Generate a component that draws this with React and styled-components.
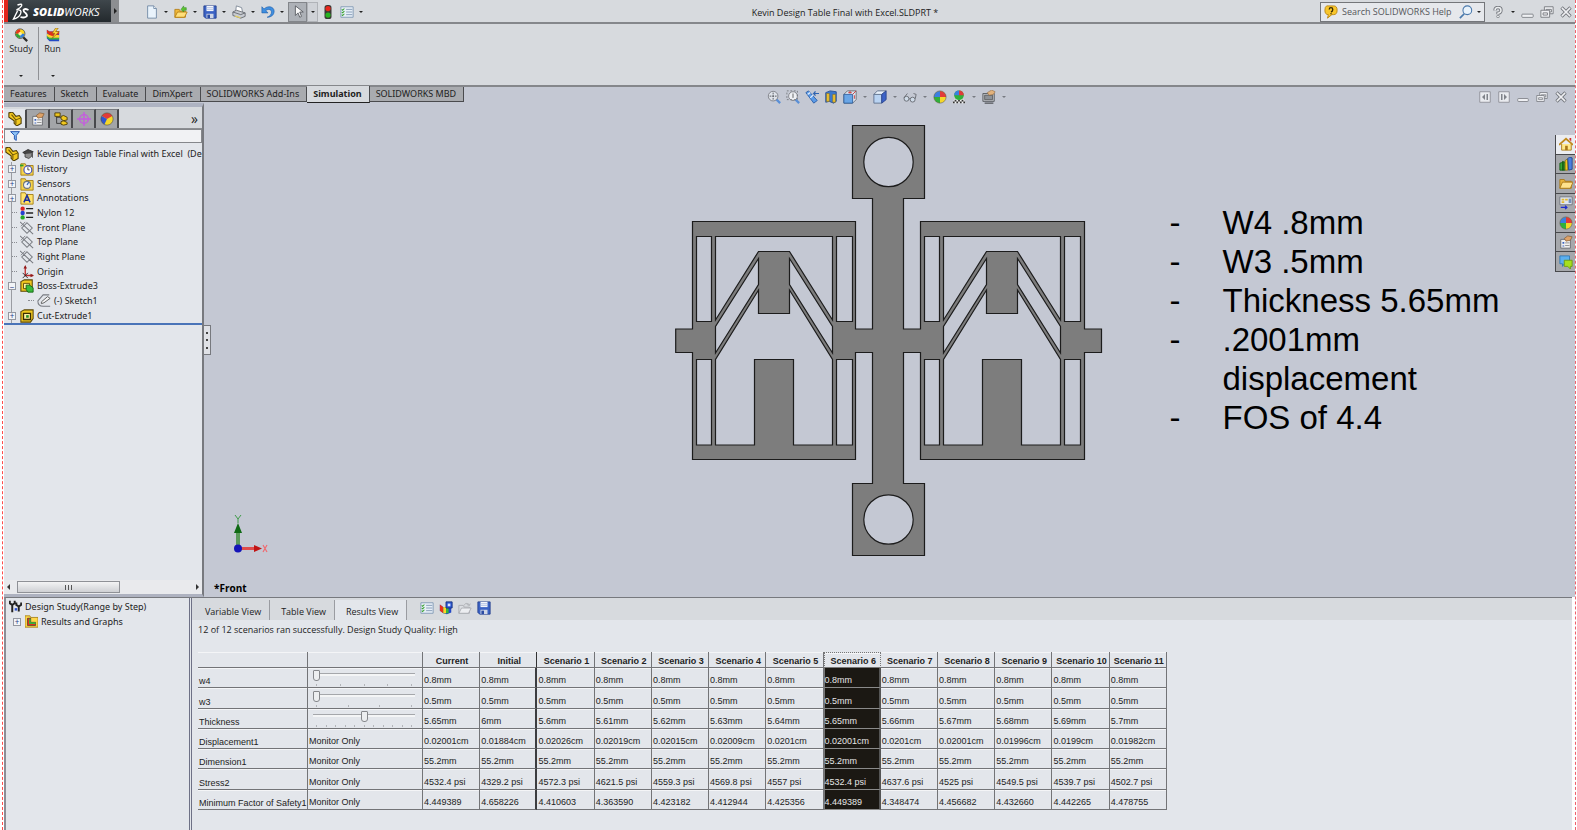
import React from 'react';
import styled, { createGlobalStyle, css } from 'styled-components';

const c = {
  chrome: '#d7dade',
  tabGrey: '#a9abaf',
  panel: '#e3e6eb',
  view: '#c4c8d3',
  line: '#85878b',
  dark: '#4a4b4e',
  part: '#7d7d7d',
};

const Global = createGlobalStyle`
  * { box-sizing: border-box; }
  body { margin: 0; background: #fff; font: 9px/12px "Open Sans", "Noto Sans", sans-serif; color: #222; }
  button, input { font: inherit; color: inherit; margin: 0; padding: 0; border: 0; background: none; }
  svg { display: block; flex: none; }
`;

const Frame = styled.div`
  min-height: 100vh;
  margin: 0 1px 0 2px;
  padding-left: 1px;
  border-left: 1px dashed #ff4a4a;
  border-right: 1px dashed #f0606a;
  display: flex;
  flex-direction: column;
`;

/* ---------- icons ---------- */

const glyphs = {
  page: <><path d="M3 1h7l3 3v11H3z" fill="#e9f3fc" stroke="#6f87a4" /><path d="M10 1v3h3" fill="#fff" stroke="#6f87a4" /></>,
  open: <><path d="M1 14V5h5l1 2h6v7z" fill="#f0b93a" stroke="#b57d14" /><path d="M1 14l3-6h11l-3 6z" fill="#ffdf7a" stroke="#b57d14" /><path d="M8 5l3-4v2h3v3h-3v2z" fill="#5ec434" stroke="#2c8a1a" strokeWidth=".6" /></>,
  openGrey: <><path d="M1 14V5h5l1 2h6v7z" fill="#dcdfe3" stroke="#a9acb0" /><path d="M1 14l3-6h11l-3 6z" fill="#eceef1" stroke="#a9acb0" /><path d="M7 5c1-3 5-3 6 0l1-2M13 5l-3-1" fill="none" stroke="#a9acb0" /></>,
  folder: <><path d="M1 14V4h5l1 2h7v8z" fill="#e9b33c" stroke="#a87718" /><path d="M1 14l3-7h12l-3 7z" fill="#ffe28c" stroke="#a87718" /></>,
  save: <><path d="M1 1h14v14H3l-2-2z" fill="#3b62c4" stroke="#25408e" /><path d="M4 1h8v6H4z" fill="#f4f6fb" /><path d="M4 3h8M4 5h8" stroke="#9db0dc" strokeWidth=".8" /><path d="M4 10h8v5H4z" fill="#cfd6e6" /><path d="M5 11h3v4H5z" fill="#2b4ba2" /></>,
  print: <><path d="M4 8l1-7 6 2 1 5" fill="#fff" stroke="#7d8896" /><path d="M1 8l4-2 10 3v4l-5 2-9-3z" fill="#c8ccd2" stroke="#63676e" /><path d="M1 8l9 3 5-2" fill="none" stroke="#63676e" /><path d="M3 13l6 2 1-1-6-2z" fill="#e3cf62" /></>,
  undo: <path d="M1 2v7h7L5.500 6.500C8 4 12 5 12 8c0 3-2 5-5 6 5 0 8-3 8-7 0-5-7-7-11.500-2.500z" fill="#3f8fe0" stroke="#1f5ca8" strokeWidth=".7" />,
  pointer: <path d="M5 1v11l3-3 2 5 2-1-2-5h4z" fill="#fafafa" stroke="#55585e" />,
  light: <><rect x="4" y="0" width="8" height="16" rx="3" fill="#3b3a35" /><circle cx="8" cy="4" r="3" fill="#e8261c" /><circle cx="8" cy="11.500" r="3" fill="#27b321" /></>,
  list: <><path d="M1 2h14v12H1z" fill="#e6eef7" stroke="#7f97b4" /><path d="M7 5h7M7 8h7M7 11h7" stroke="#7f97b4" /><path d="M2 5l1 1 2-2M2 8l1 1 2-2M2 11l1 1 2-2" fill="none" stroke="#37a12c" strokeWidth="1.200" /></>,
  study: <><path d="M10 10l5 5" stroke="#2c2c2c" strokeWidth="2.600" /><circle cx="7" cy="6.500" r="5.500" fill="#ffd91c" stroke="#555" /><path d="M7 1.500a5 5 0 0 0-5 5h5z" fill="#e8351d" /><path d="M2 6.500a5 5 0 0 0 5 5v-5z" fill="#2ca53a" /><path d="M7 11.500a5 5 0 0 0 5-5H7z" fill="#2f7ee0" /><circle cx="7" cy="6.500" r="2" fill="#fff3a0" /></>,
  run: <><path d="M1 2l3 2h11v11H4l-3-3z" fill="#2449c6" /><path d="M1 9l3 2h11v2H4l-3-2z" fill="#38b53a" /><path d="M1 6l3 2h11v3H4L1 9z" fill="#ffd52a" /><path d="M1 2l3 2h11v3l-8 2-3-1-3-3z" fill="#e0301c" /><path d="M11 0L7 6h3l-3 6 8-8h-4l3-4z" fill="#ffd83a" stroke="#8a5a10" strokeWidth=".7" /></>,
  help: <><path d="M3 1h8q4 0 4 5t-4 5H9l-5 4 1-4Q1 11 1 6q0-4 2-5z" fill="#f8c62c" stroke="#b98511" /><path d="M6 5q0-2 2-2t2 2-2 3M8 9.500v1" fill="none" stroke="#3a2c05" strokeWidth="1.600" /></>,
  search: <><path d="M6 10l-5 5" stroke="#4a79ac" strokeWidth="2" /><circle cx="9.500" cy="6" r="5" fill="#e8f2fb" stroke="#4a79ac" strokeWidth="1.200" /></>,
  question: <><path d="M4 6q0-4 4-4t4 3.500-4 4V11" fill="none" stroke="#76797f" strokeWidth="4.400" /><path d="M4 6q0-4 4-4t4 3.500-4 4V11" fill="none" stroke="#eceef0" strokeWidth="2" /><circle cx="8" cy="14" r="1.800" fill="#eceef0" stroke="#76797f" /></>,
  minimize: <rect x="1" y="10" width="14" height="4" rx="1" fill="#eff0f3" stroke="#73767c" />,
  restore: <><path d="M5 2h10v8H5z" fill="#eff0f3" stroke="#73767c" /><path d="M7 5h6v3H7z" fill="none" stroke="#73767c" /><path d="M1 6h10v8H1z" fill="#eff0f3" stroke="#73767c" /><path d="M3.500 9h5v2.500h-5z" fill="none" stroke="#73767c" /></>,
  close: <><path d="M2 2l12 12M14 2L2 14" stroke="#73767c" strokeWidth="4.400" /><path d="M2.500 2.500l11 11M13.500 2.500l-11 11" stroke="#eff0f3" strokeWidth="2" /></>,
  paneLeft: <><path d="M1 1h14v14H1z" fill="#e9ebef" stroke="#80838a" /><path d="M8 4v8L4 8zM10 4h2v8h-2z" fill="#80838a" /></>,
  paneRight: <><path d="M1 1h14v14H1z" fill="#e9ebef" stroke="#80838a" /><path d="M8 4v8l4-4zM4 4h2v8H4z" fill="#80838a" /></>,
  zoomFit: <><path d="M10 10l5 5" stroke="#5a8fd6" strokeWidth="2.600" /><circle cx="7" cy="7" r="5.500" fill="#dfe3ea" stroke="#7a7d84" /><path d="M7 3v8M3 7h8" stroke="#4c4f55" strokeDasharray="2 1" /></>,
  zoomArea: <><path d="M10 10l5 5" stroke="#5a8fd6" strokeWidth="2.600" /><circle cx="8" cy="7" r="5" fill="#eef0f4" stroke="#7a7d84" /><path d="M1 1h12v10H1z" fill="none" stroke="#74777d" strokeDasharray="2 2" /><path d="M8 4v5" stroke="#555" /></>,
  prev: <><path d="M1 3l3-2 10 11-4 3z" fill="#5b9be8" stroke="#2c5ea6" /><path d="M3 5l3-2M6 9l3-3" stroke="#dcebff" strokeWidth="1.500" /><path d="M16 4h-6l2-2.500M10 4l2 2.500" fill="none" stroke="#2f63b0" strokeWidth="1.400" /></>,
  section: <><path d="M2 3l5-2 7 1v11l-3 2-5-2-4 1z" fill="#3c78cc" stroke="#274f92" /><path d="M3 4h3v9H3zM10 5h3v9h-3z" fill="#f0c531" stroke="#8c6a12" strokeWidth=".6" /></>,
  orient: <><path d="M5 1h10v10l-4 4H1V5z" fill="#dce5f0" stroke="#66696f" /><path d="M1 5h10v10H1z" fill="#6aa6e6" stroke="#2f5f9e" /><path d="M11 5l4-4M8 1v3M6 3h4M13 6v4" stroke="#c33" strokeWidth="1" /></>,
  cube: <><path d="M1 5h9v10H1z" fill="#b9d3f2" stroke="#5c6f8c" /><path d="M1 5l4-4h10l-5 4z" fill="#e7f0fa" stroke="#5c6f8c" /><path d="M10 5l5-4v10l-5 4z" fill="#3b62c8" stroke="#2a468e" /></>,
  glasses: <><circle cx="4" cy="10" r="2.800" fill="#cfdbe8" stroke="#63676e" /><circle cx="11" cy="11" r="2.800" fill="#cfdbe8" stroke="#63676e" /><path d="M1 9L5 4M7 10l1 0M14 10l1-5-3-1" fill="none" stroke="#63676e" /></>,
  ball: <><circle cx="8" cy="8" r="7" fill="#f5d72a" /><path d="M8 1a7 7 0 0 0-7 7h7z" fill="#3b7fe0" /><path d="M8 1a7 7 0 0 1 7 7H8z" fill="#e23a3a" /><path d="M1 8a7 7 0 0 0 7 7V8z" fill="#31b03a" /><circle cx="8" cy="8" r="7" fill="none" stroke="#555" strokeWidth=".6" /></>,
  ballTab: <><circle cx="8" cy="8" r="7" fill="#f5d72a" /><path d="M8 8L2 4.500A7 7 0 0 1 14 4.500z" fill="#e23a3a" /><path d="M8 8L2 4.500A7 7 0 0 0 5 14.400z" fill="#2f55cf" /><circle cx="8" cy="8" r="7" fill="none" stroke="#444" strokeWidth=".6" /></>,
  scene: <><path d="M0 15l3-5h10l3 5z" fill="#f3f3f3" /><path d="M3 11h2v2H3zM7 11h2v2H7zM11 11h2v2h-2zM1 13h2v2H1zM5 13h2v2H5zM9 13h2v2H9zM13 13h2v2h-2z" fill="#333" /><circle cx="8" cy="6" r="5.500" fill="#31b03a" /><path d="M8 .5A5.500 5.500 0 0 0 2.500 6H8z" fill="#3b7fe0" /><path d="M8 .5A5.500 5.500 0 0 1 13.500 6H8z" fill="#e23a3a" /></>,
  monitor: <><path d="M1 4h13v9H1z" fill="#b9bcc1" stroke="#55585d" /><path d="M3 6h9v5H3z" fill="#8d9197" stroke="#444" strokeWidth=".7" /><path d="M3 15h10" stroke="#55585d" strokeWidth="1.500" /><path d="M6 3l5-3 4 2-2 3-5 1z" fill="#e2b27c" stroke="#8a6237" strokeWidth=".6" /></>,
  part: <><path d="M1 1l4-1 4 5 4-1 2 3v6l-5 3-3-3v-3L1 6z" fill="#f2c81f" stroke="#4d3c05" strokeWidth="1.200" /><path d="M4 3l5 6v5M9 9l5-2" fill="none" stroke="#6c5508" strokeWidth="1.200" /></>,
  props: <><path d="M2 5h11v10H2z" fill="#f1f1f1" stroke="#66696e" /><path d="M4 8h2v2H4zM4 12h2v1H4z" fill="#3a63c0" /><path d="M7 9h5M7 12h5" stroke="#888" /><path d="M6 4l4-3 5 1-2 4-5 1z" fill="#dda268" stroke="#7b5126" strokeWidth=".7" /></>,
  config: <><path d="M3 3v10h5M3 6h5" fill="none" stroke="#333" /><path d="M1 1h6v4H1zM8 5l3-1 4 2v3l-4 1-3-2zM8 11l3-1 4 2v2l-4 1-3-1z" fill="#f0c81f" stroke="#4d3c05" /></>,
  target: <><circle cx="8" cy="8" r="5" fill="none" stroke="#c65be0" strokeWidth="1.600" /><path d="M8 0v16M0 8h16" stroke="#c65be0" strokeWidth="1.600" /></>,
  funnel: <path d="M1 1h14L10 7v8l-3-2V7z" fill="#8ec3f5" stroke="#1f4fae" strokeWidth="1.500" />,
  cap: <><path d="M1 6l7-4 7 3-7 5z" fill="#444" stroke="#222" /><path d="M4 8v4l5 2 4-3V7" fill="#8d8d8d" stroke="#333" /><path d="M14 6v7" stroke="#333" /></>,
  history: <><path d="M1 2h5l1 2h8v11H1z" fill="#f5d34b" stroke="#a07b12" /><circle cx="9" cy="9" r="4.500" fill="#fff" stroke="#4a55b8" strokeWidth="1.400" /><path d="M9 6v3h2" fill="none" stroke="#333" /><path d="M0 4h4" stroke="#2aa22a" strokeWidth="2" /></>,
  sensors: <><path d="M1 2h5l1 2h8v11H1z" fill="#f5d34b" stroke="#a07b12" /><circle cx="8" cy="9" r="4" fill="#f0f3f6" stroke="#71757b" strokeWidth="1.200" /><path d="M8 9l2-3" stroke="#2c63b8" strokeWidth="1.400" /></>,
  annot: <><path d="M1 2h5l1 2h8v11H1z" fill="#ffe26a" stroke="#a07b12" /><path d="M4.500 13L8 5l3.500 8M6 10.500h4" fill="none" stroke="#1d2f9c" strokeWidth="1.800" /></>,
  material: <><circle cx="3" cy="3" r="2.500" fill="#d92222" /><circle cx="3" cy="8" r="2.500" fill="#2740d0" /><circle cx="3" cy="13" r="2.500" fill="#25a825" /><path d="M7 3h8M7 8h8M7 13h8" stroke="#222" strokeWidth="1.600" /></>,
  plane: <><path d="M8 2l6 6-6 6-6-6zM0 1l15 14" fill="none" stroke="#777a80" strokeWidth="1.200" /><path d="M1 6l5-5" stroke="#777a80" /></>,
  origin: <><path d="M6 2v10h9" fill="none" stroke="#c22a2a" strokeWidth="1.500" /><path d="M4 4l2-4 2 4zM12 10l4 2-4 2z" fill="#8f1b1b" /><path d="M3 9l6 6M9 9l-6 6" stroke="#222" /></>,
  boss: <><path d="M1 3l4-2h9v9l-3 4H1z" fill="#f0c81f" stroke="#5a4605" strokeWidth="1.200" /><path d="M4 5h7v6H4z" fill="#fff1a0" stroke="#5a4605" /><path d="M7 7h4l4 3v5H9l-2-3z" fill="#3bbb3b" stroke="#146214" /></>,
  cut: <><path d="M1 3l4-2h10v10l-3 4H1z" fill="#f0c81f" stroke="#5a4605" strokeWidth="1.200" /><path d="M4 5h8v7H4z" fill="#fff1a0" stroke="#3a2d03" strokeWidth="1.500" /><path d="M7 7h3v3H7z" fill="#2a8f2a" /></>,
  sketch: <><path d="M14 1H7L1 8q0 6 6 6h8" fill="none" stroke="#777a80" strokeWidth="1.200" /><path d="M5 9l7-6 3 2-7 5-3 1z" fill="#f3f3f3" stroke="#555" /></>,
  design: <><path d="M1 1v3l3 2v9M7 1v3L4 6M9 3v3l3 2v6M15 3v3l-3 2" fill="none" stroke="#222" strokeWidth="2.400" /><path d="M7 10h3v3H7z" fill="#2a4fd0" /></>,
  graph: <><path d="M0 1h6l1 2h9v12H0z" fill="#ffd84a" stroke="#a07b12" /><path d="M3 4h4v5h6v4H3z" fill="#e0301c" stroke="#333" strokeWidth=".8" /><path d="M5 5h2v4h6v2H5z" fill="#37b53a" /></>,
  runSmall: <><path d="M1 4l4 3h9v6l-5 2-4-1-4-3z" fill="#2449c6" /><path d="M1 4l4 3v7l-4-3z" fill="#e8301c" /><path d="M5 7h6v7H5z" fill="#38b53a" /><path d="M5 7h3v7H5z" fill="#ffd52a" /><path d="M8 1h7v7H8z" fill="#2d5ad6" stroke="#16307c" /><path d="M10 3h3v3h-3z" fill="#dce6ff" /></>,
  home: <><path d="M3 8v7h11V8" fill="#ffe88a" stroke="#a8781a" /><path d="M0 9l8-7 8 7" fill="none" stroke="#c08a1c" strokeWidth="2" /><path d="M12 1h2v4l-2-2z" fill="#c33" /><path d="M7 10h3v5H7z" fill="#a8781a" /></>,
  library: <><path d="M1 7l4-1v9H1zM4 5l3 1v9H4z" fill="#37a737" stroke="#155c15" /><path d="M7 4l3-2v13H7z" fill="#f0c81f" stroke="#7b600a" strokeWidth=".8" /><path d="M10 2l2-2 3 1v13l-4 1z" fill="#4a7fe0" stroke="#22468e" /></>,
  palette: <><path d="M1 1h14v9H1z" fill="#dfe6f0" stroke="#70747a" /><path d="M3 3h3v2H3zM7 3h3v2H7zM3 6h3v2H3z" fill="#e3b830" /><path d="M11 3h3v5h-3z" fill="#7591b8" /><path d="M2 13h7M7 11l2 2-2 2" fill="none" stroke="#1c2bd0" strokeWidth="1.500" /></>,
  forum: <><path d="M1 1h11v9H6l-2 3v-3H1z" fill="#5bb0f0" stroke="#2f78b4" /><path d="M6 6h9v7h-2v3l-3-3H6z" fill="#a6e01c" stroke="#6a9a10" /></>,
};

const Icon = ({ name, size = 14 }) => (
  <svg width={size} height={size} viewBox="0 0 16 16" fill="none" aria-hidden="true">{glyphs[name]}</svg>
);

const Caret = styled.span`
  width: 0;
  height: 0;
  border: 2px solid transparent;
  border-top-color: ${(p) => (p.$soft ? '#777a82' : '#222')};
  border-bottom: 0;
`;

/* ---------- title bar ---------- */

const TitleBar = styled.header`
  height: 24px;
  display: flex;
  align-items: center;
  background: ${c.chrome};
  border-bottom: 2px solid ${c.line};
`;

const Logo = styled.div`
  align-self: stretch;
  width: 107px;
  padding: 2px 0 0 4px;
  display: flex;
  align-items: center;
  gap: 3px;
  background: linear-gradient(#3f474c, #23292d);
  border-left: 4px solid #e1261c;
  color: #fff;
  font: italic 11px/20px "Open Sans", sans-serif;
  b { font-weight: 800; }
`;

const LogoArrow = styled.button`
  align-self: stretch;
  width: 8px;
  display: grid;
  place-items: center;
  background: #8c8e91;
  &::after { content: ""; border: 3px solid transparent; border-left-color: #222; border-right: 0; }
`;

const QuickTools = styled.nav`
  display: flex;
  align-items: center;
  margin-left: 24px;
  padding-top: 2px;
`;

const Tool = styled.button`
  width: ${(p) => p.$w || 19}px;
  height: ${(p) => p.$h || 20}px;
  display: grid;
  place-items: center;
  ${(p) => p.$on && css`background: #adb1b7; border: 1px solid #83868b;`}
  ${(p) => p.$edge && css`background: #cfd2d7; border: 1px solid #b0b3b8;`}
`;

const DocTitle = styled.h1`
  flex: 1;
  margin: 0;
  padding: 3px 0 0 4px;
  text-align: center;
  font: inherit;
`;

const SearchBox = styled.label`
  width: 165px;
  height: 20px;
  margin-top: 2px;
  padding: 0 3px;
  display: flex;
  align-items: center;
  gap: 4px;
  background: #e6e8ec;
  border: 1px solid #74767a;
  input { flex: 1; min-width: 0; outline: 0; }
  input::placeholder { color: #55575b; opacity: 1; }
`;

const SysButtons = styled.div`
  display: flex;
  align-items: center;
  margin-left: 3px;
  padding-top: 2px;
`;

/* ---------- ribbon ---------- */

const Ribbon = styled.section`
  height: 63px;
  padding: 3px 0 0 0;
  display: flex;
  background: ${c.chrome};
  border-bottom: 2px solid ${c.line};
`;

const RibbonButton = styled.button`
  width: ${(p) => p.$w || 34}px;
  height: 53px;
  display: flex;
  flex-direction: column;
  align-items: center;
  line-height: 13px;
  padding: 1px 0 3px;
  ${Caret} { margin-top: auto; }
`;

const RibbonRule = styled.span`
  width: 1px;
  height: 53px;
  background: #8f9195;
`;

/* ---------- workspace ---------- */

const Workspace = styled.main`
  flex: 1;
  display: grid;
  grid-template: 16px minmax(0, 1fr) / 200px minmax(0, 1fr);
  background: ${c.view};
`;

const CommandTabs = styled.nav`
  grid-area: 1 / 1 / 2 / 3;
  justify-self: start;
  z-index: 1;
  display: flex;
  align-items: flex-start;
  font-family: "Noto Sans", sans-serif;
`;

const CommandTab = styled.button`
  height: 15px;
  padding: 0 7px 0 6px;
  line-height: 12px;
  white-space: nowrap;
  background: ${c.tabGrey};
  border-right: 1px solid ${c.dark};
  border-bottom: 1px solid ${c.dark};
  ${(p) => p.$on && css`
    height: 17px;
    margin-top: -1px;
    background: ${c.chrome};
    border-bottom: 1px solid #222;
    font-weight: 700;
    color: #222;
  `}
`;

const Sidebar = styled.aside`
  grid-area: 2 / 1;
  display: flex;
  flex-direction: column;
  background: ${c.panel};
  border-top: 4px solid #aeb3c2;
  border-right: 2px solid #77797e;
  border-bottom: 3px solid #aeb2c0;
`;

const ManagerTabs = styled.div`
  display: flex;
  height: 22px;
  padding: 2px 4px 0 0;
  background: ${c.chrome};
  border-bottom: 1px solid #8c8e92;
  font-size: 14px;
`;

const ManagerTab = styled.button`
  width: 23px;
  display: grid;
  place-items: center;
  background: ${(p) => (p.$on ? c.panel : '#a3a5a8')};
  border-right: 2px solid #48494c;
  border-top: 1px solid ${(p) => (p.$on ? c.panel : '#77797e')};
`;

const More = styled.button`
  margin-left: auto;
  line-height: 12px;
`;

const FilterBox = styled.label`
  height: 14px;
  padding: 0 5px;
  display: flex;
  align-items: center;
  gap: 4px;
  background: #f1f2f4;
  border: 1px solid #85878b;
  input { flex: 1; min-width: 0; outline: 0; }
`;

const Tree = styled.ul`
  list-style: none;
  margin: 0;
  font-family: "Noto Sans", sans-serif;
  padding: ${(p) => (p.$tall ? '4px 0 0' : '0')};
  height: ${(p) => (p.$tall ? '182px' : 'auto')};
  display: grid;
  grid-auto-rows: ${(p) => (p.$tall ? 'minmax(0, 1fr)' : '15px')};
  overflow: hidden;
  border-bottom: ${(p) => (p.$tall ? '2px solid #4a74b8' : '0')};
`;

const Node = styled.li`
  display: flex;
  align-items: center;
  white-space: nowrap;
  padding-left: ${(p) => p.$pad}px;
  gap: 3px;
  ${(p) => p.$line && css`
    background: linear-gradient(#9a9ca2, #9a9ca2) 7px 0 / 1px 100% no-repeat;
  `}
`;

const Twist = styled.button`
  width: 8px;
  height: 8px;
  margin-right: 1px;
  flex: none;
  background: #f2f4f7;
  border: 1px solid #9497a0;
  font-size: 8px;
  line-height: 5px;
  color: #2b3f8c;
  display: grid;
  place-items: center;
`;

const Stub = styled.span`
  width: ${(p) => p.$w || 5}px;
  margin-left: ${(p) => p.$ml || 4}px;
  border-top: 1px dotted #8a8c92;
`;

const HScroll = styled.div`
  margin-top: auto;
  height: 14px;
  padding: 0 3px;
  display: flex;
  align-items: center;
  gap: 7px;
  background: #e9eaed;
`;

const ScrollArrow = styled.button`
  border: 3px solid transparent;
  ${(p) => (p.$left ? css`border-right-color: #333; border-left: 0;` : css`border-left-color: #333; border-right: 0; margin-left: auto;`)}
`;

const ScrollThumb = styled.div`
  width: 103px;
  height: 12px;
  display: flex;
  align-items: center;
  justify-content: center;
  gap: 2px;
  background: linear-gradient(#f3f3f4, #cfd0d4);
  border: 1px solid #8f9196;
  i { width: 1px; height: 5px; background: #555; }
`;

/* ---------- graphics area ---------- */

const Viewport = styled.section`
  grid-area: 1 / 2 / 3 / 3;
  display: grid;
  grid-template: 20px minmax(0, 1fr) / minmax(0, 1fr) auto minmax(0, 1fr);
`;

const ViewLeft = styled.div`
  grid-area: 1 / 1 / 3 / 2;
  display: flex;
  flex-direction: column;
  align-items: flex-start;
`;

const Splitter = styled.button`
  width: 7px;
  height: 30px;
  margin: 238px 0 auto;
  background: #dfe1e6;
  border: 1px solid #77797e;
  border-left: 0;
  display: flex;
  flex-direction: column;
  align-items: center;
  justify-content: space-evenly;
  i { width: 2px; height: 2px; background: #444; }
`;

const ViewName = styled.strong`
  margin: 25px 0 3px 10px;
  font-size: 10px;
  color: #000;
`;

const HeadsUp = styled.nav`
  grid-area: 1 / 2;
  justify-self: center;
  display: flex;
  align-items: center;
  margin-right: 5px;
`;

const DocButtons = styled.div`
  grid-area: 1 / 3;
  justify-self: end;
  display: flex;
  margin-right: 5px;
`;

const ModelArea = styled.figure`
  grid-area: 2 / 2;
  margin: 17px 0 0;
`;

const ViewRight = styled.div`
  grid-area: 2 / 3;
  display: flex;
  justify-content: space-between;
  align-items: flex-start;
`;

const Notes = styled.ul`
  list-style: none;
  width: 344px;
  margin: 96px 0 0 65px;
  padding: 0;
  color: #000;
  font: 33px/39px "Liberation Sans", Arial, sans-serif;
  li { display: flex; }
  li::before { content: "-"; flex: none; width: 53px; }
`;

const TaskTabs = styled.nav`
  width: 20px;
  height: 137px;
  margin-top: 28px;
  display: flex;
  flex-direction: column;
  border-left: 1px solid #48494c;
`;

const TaskTab = styled.button`
  flex: 1;
  display: grid;
  place-items: center;
  background: ${(p) => (p.$on ? '#ebedf1' : '#a6a8ac')};
  border-bottom: 1px solid #48494c;
`;

/* ---------- study panel ---------- */

const StudyPanel = styled.section`
  min-height: 233px;
  margin-right: 3px;
  display: flex;
  background: ${c.panel};
  border-top: 1px solid #77797e;
  border-left: 2px solid #8b8d95;
`;

const StudyTree = styled.aside`
  width: 186px;
  flex: none;
  padding-top: 1px;
  border-right: 3px double #6e7186;
`;

const Results = styled.div`
  flex: 1;
  min-width: 0;
`;

const ResultTabs = styled.div`
  height: 22px;
  padding: 2px 0 0 2px;
  display: flex;
  background: ${c.chrome};
`;

const ResultTab = styled.button`
  padding: 3px 8px 0 11px;
  border-right: 1px solid #9a9ca1;
  background: ${(p) => (p.$on ? c.panel : 'none')};
`;

const ResultIcons = styled.div`
  display: flex;
  margin-left: 10px;
  height: 15px;
`;

const Status = styled.p`
  margin: 0;
  padding: 3px 0 0 6px;
  line-height: 14px;
`;

const DataTable = styled.table`
  width: 969px;
  height: 158px;
  margin: 15px 0 0 6px;
  table-layout: fixed;
  border-collapse: separate;
  border-spacing: 0;
  font: 9px/11px "Liberation Sans", Arial, sans-serif;
  color: #222;
`;

const cellLines = css`
  padding: 0 0 0 1px;
  white-space: nowrap;
  overflow: visible;
  border-right: 1px solid #737477;
  border-bottom: 1px solid #737477;
  box-shadow: inset 0 1px #f4f5f7;
`;

const HeadCell = styled.th`
  ${cellLines}
  height: 16px;
  padding: 3px 0 0 2px;
  font-weight: 700;
  text-align: center;
  ${(p) => p.$on && css`padding-top: 2px; border: 1px dotted #777; border-bottom-style: solid;`}
  ${(p) => p.$heavy && css`border-right: 1px solid #333;`}
`;

const RowHead = styled.th`
  ${cellLines}
  height: 20px;
  vertical-align: bottom;
  text-align: left;
  font-weight: 400;
`;

const Cell = styled.td`
  ${cellLines}
  height: 20px;
  vertical-align: bottom;
  padding-bottom: 1px;
  ${(p) => p.$heavy && css`border-right: 2px solid #3c3d40;`}
  ${(p) => p.$on && css`
    background: #1b1813;
    color: #e6e6e6;
    border-left: 1px solid #777;
    border-right: 2px solid #555;
    border-bottom-color: #8a8a8a;
    padding-left: 0;
    box-shadow: none;
  `}
`;

const SliderBox = styled.div`
  height: 18px;
  padding: 0 7px 0 4px;
  display: flex;
  flex-direction: column;
  justify-content: space-between;
`;

const Slider = styled.input`
  appearance: none;
  width: 100%;
  height: 13px;
  &::-webkit-slider-runnable-track {
    height: 3px;
    background: #f4f5f6;
    border-top: 1px solid #a5a7ab;
  }
  &::-webkit-slider-thumb {
    appearance: none;
    width: 7px;
    height: 11px;
    margin-top: -4px;
    background: #eceef0;
    border: 1px solid #85878b;
    border-radius: 1px 1px 3px 3px;
  }
`;

const Ticks = styled.div`
  display: flex;
  justify-content: space-between;
  padding: 0 3px;
  i { width: 1px; height: 2px; background: #b3b5b9; }
`;

/* ---------- data ---------- */

const quick = [
  ['New', 'page'], ['Open', 'open'], ['Save', 'save'], ['Print', 'print'], ['Undo', 'undo'],
];
const commandTabs = ['Features', 'Sketch', 'Evaluate', 'DimXpert', 'SOLIDWORKS Add-Ins', 'Simulation', 'SOLIDWORKS MBD'];
const managerTabs = ['part', 'props', 'config', 'target', 'ballTab'];
const tree = [
  ['+', 'history', 'History'], ['+', 'sensors', 'Sensors'], ['+', 'annot', 'Annotations'],
  ['', 'material', 'Nylon 12'], ['', 'plane', 'Front Plane'], ['', 'plane', 'Top Plane'],
  ['', 'plane', 'Right Plane'], ['', 'origin', 'Origin'], ['−', 'boss', 'Boss-Extrude3'],
  ['sub', 'sketch', '(-) Sketch1'], ['+', 'cut', 'Cut-Extrude1'],
];
const headsUp = ['zoomFit', 'zoomArea', 'prev', 'section', 'orient', '', 'cube', '', 'glasses', '', 'ball', 'scene', '', 'monitor', ''];
const taskTabs = ['home', 'library', 'folder', 'palette', 'ball', 'props', 'forum'];
const notes = ['W4 .8mm', 'W3 .5mm', 'Thickness 5.65mm', '.2001mm displacement', 'FOS of 4.4'];
const columns = ['Current', 'Initial', ...Array.from({ length: 11 }, (_, i) => `Scenario ${i + 1}`)];
const same = (v) => Array(13).fill(v);
const rows = [
  { name: 'w4', ticks: 5, at: 0, values: same('0.8mm') },
  { name: 'w3', ticks: 4, at: 0, values: same('0.5mm') },
  { name: 'Thickness', ticks: 11, at: 50, values: ['5.65', '6', '5.6', '5.61', '5.62', '5.63', '5.64', '5.65', '5.66', '5.67', '5.68', '5.69', '5.7'].map((v) => `${v}mm`) },
  { name: 'Displacement1', values: ['0.02001', '0.01884', '0.02026', '0.02019', '0.02015', '0.02009', '0.0201', '0.02001', '0.0201', '0.02001', '0.01996', '0.0199', '0.01982'].map((v) => `${v}cm`) },
  { name: 'Dimension1', values: same('55.2mm') },
  { name: 'Stress2', values: ['4532.4', '4329.2', '4572.3', '4621.5', '4559.3', '4569.8', '4557', '4532.4', '4637.6', '4525', '4549.5', '4539.7', '4502.7'].map((v) => `${v} psi`) },
  { name: 'Minimum Factor of Safety1', values: ['4.449389', '4.658226', '4.410603', '4.363590', '4.423182', '4.412944', '4.425356', '4.449389', '4.348474', '4.456682', '4.432660', '4.442265', '4.478755'] },
];
const picked = 7;

/* ---------- drawings ---------- */

const Voids = () => (
  <>
    <path d="M696.500 236.500h15v85h-15zM836.500 236.500h16v85h-16zM696.500 359.500h15v85.500h-15zM836.500 359.500h16v85.500h-16z" />
    <path d="M715.500 236.500H832.500V320L789.500 251.500H758.500L715.500 320z" />
    <path d="M758.500 258.500V284.500L715.500 353V326.500zM789.500 258.500V284.500L832.500 353V326.500z" />
    <path d="M758.500 290V313.500H789.500V290L832.500 359.500V445H793.500V359.500H754.500V445H715.500V359.500z" />
  </>
);

const Model = () => (
  <svg width="430" height="434" viewBox="675 124 430 434" role="img" aria-label="Flexure part, front view" stroke="#1c1c1c" strokeWidth="1.200">
    <path
      fill={c.part}
      d="M852.500 125.500H924.500V198.500H903.500V329H920.500V221.500H1084.500V329H1101.500V352.500H1084.500V459.500H920.500V352.500H903.500V483.500H924.500V555.500H852.500V483.500H872.500V352.500H855.500V459.500H692.500V352.500H675.700V329H692.500V221.500H855.500V329H872.500V198.500H852.500z"
    />
    <g fill={c.view}>
      <circle cx="888.500" cy="162" r="24.700" />
      <circle cx="888.500" cy="519.500" r="24.700" />
      <Voids />
      <g transform="translate(228 0)"><Voids /></g>
    </g>
  </svg>
);

const TriadDrawing = styled.svg`
  margin-left: 26px;
`;

const Triad = () => (
  <TriadDrawing width="44" height="42" viewBox="0 0 44 42" aria-hidden="true">
    <path d="M6 13h4v20H6z" fill="#5b9a5b" />
    <path d="M8 8l4 10H4z" fill="#0f6a14" />
    <path d="M10 32h16v3H10z" fill="#e04c4c" />
    <path d="M24 30l8 3.500-8 3.500z" fill="#c01414" />
    <circle cx="8" cy="33.500" r="4" fill="#1414b8" />
    <path d="M5 0l3 4 3-4M8 4v4" fill="none" stroke="#3f9a49" />
    <path d="M33 30l4 7M37 30l-4 7" stroke="#f06a70" strokeWidth="1.200" />
  </TriadDrawing>
);

const LogoMark = () => (
  <svg width="18" height="18" viewBox="0 0 17 18" fill="none" stroke="#fff" strokeWidth="1.400" aria-hidden="true">
    <path d="M5 2q5-2 4 1-1 2-5 4 6-1 4 4-2 4-7 5l4-8" />
    <path d="M16 7q-4-2-5 0 0 2 2 3 3 3 0 4-2 1-5 0" strokeWidth="1.800" />
  </svg>
);

/* ---------- page ---------- */

export default function App() {
  return (
    <Frame>
      <Global />
      <TitleBar>
        <Logo><LogoMark /><span><b>SOLID</b>WORKS</span></Logo>
        <LogoArrow aria-label="Show menu" />
        <QuickTools>
          {quick.map(([label, icon]) => (
            <React.Fragment key={label}>
              <Tool aria-label={label} $w={17}><Icon name={icon} /></Tool>
              <Tool aria-label={`${label} options`} $w={12}><Caret /></Tool>
            </React.Fragment>
          ))}
          <Tool aria-label="Select" $on><Icon name="pointer" /></Tool>
          <Tool aria-label="Select options" $w={11} $edge><Caret /></Tool>
          <Tool aria-label="Rebuild"><Icon name="light" /></Tool>
          <Tool aria-label="Options"><Icon name="list" /></Tool>
          <Tool aria-label="More options" $w={10}><Caret /></Tool>
        </QuickTools>
        <DocTitle>Kevin Design Table Final with Excel.SLDPRT *</DocTitle>
        <SearchBox>
          <Icon name="help" />
          <input placeholder="Search SOLIDWORKS Help" aria-label="Search SOLIDWORKS Help" />
          <Icon name="search" />
          <Caret />
        </SearchBox>
        <SysButtons>
          <Tool aria-label="Help"><Icon name="question" size={12} /></Tool>
          <Tool aria-label="Help options" $w={11}><Caret /></Tool>
          <Tool aria-label="Minimize"><Icon name="minimize" size={13} /></Tool>
          <Tool aria-label="Restore"><Icon name="restore" /></Tool>
          <Tool aria-label="Close"><Icon name="close" size={12} /></Tool>
        </SysButtons>
      </TitleBar>

      <Ribbon>
        <RibbonButton><Icon name="study" />Study<Caret /></RibbonButton>
        <RibbonRule />
        <RibbonButton $w={27}><Icon name="run" />Run<Caret /></RibbonButton>
      </Ribbon>

      <Workspace>
        <CommandTabs>
          {commandTabs.map((t) => <CommandTab key={t} $on={t === 'Simulation'}>{t}</CommandTab>)}
        </CommandTabs>

        <Sidebar>
          <ManagerTabs>
            {managerTabs.map((t, i) => <ManagerTab key={t} $on={i === 0} aria-label={t}><Icon name={t} /></ManagerTab>)}
            <More aria-label="More tabs">»</More>
          </ManagerTabs>
          <FilterBox><Icon name="funnel" size={10} /><input aria-label="Filter tree" /></FilterBox>
          <Tree $tall>
            <Node $pad={1}><Icon name="part" /><Icon name="cap" size={12} />Kevin Design Table Final with Excel&nbsp; (De</Node>
            {tree.map(([kind, icon, label]) => (
              <Node key={label} $line $pad={kind === 'sub' ? 23 : 4}>
                {kind === 'sub' ? <Stub $w={6} $ml={1} /> : kind ? <Twist>{kind}</Twist> : <Stub />}
                <Icon name={icon} />
                {label}
              </Node>
            ))}
          </Tree>
          <HScroll>
            <ScrollArrow $left aria-label="Scroll left" />
            <ScrollThumb><i /><i /><i /></ScrollThumb>
            <ScrollArrow aria-label="Scroll right" />
          </HScroll>
        </Sidebar>

        <Viewport>
          <ViewLeft>
            <Splitter aria-label="Collapse panel"><i /><i /><i /></Splitter>
            <Triad />
            <ViewName>*Front</ViewName>
          </ViewLeft>
          <HeadsUp>
            {headsUp.map((n, i) => (n
              ? <Tool key={n} aria-label={n} $w={19}><Icon name={n} /></Tool>
              : <Tool key={i} aria-label="Options" $w={11}><Caret $soft /></Tool>))}
          </HeadsUp>
          <DocButtons>
            {['paneLeft', 'paneRight', 'minimize', 'restore', 'close'].map((n) => (
              <Tool key={n} aria-label={n}><Icon name={n} size={12} /></Tool>
            ))}
          </DocButtons>
          <ModelArea><Model /></ModelArea>
          <ViewRight>
            <Notes>{notes.map((n) => <li key={n}>{n}</li>)}</Notes>
            <TaskTabs>
              {taskTabs.map((t, i) => <TaskTab key={t} $on={i === 0} aria-label={t}><Icon name={t} /></TaskTab>)}
            </TaskTabs>
          </ViewRight>
        </Viewport>
      </Workspace>

      <StudyPanel>
        <StudyTree>
          <Tree>
            <Node $pad={3}><Icon name="design" size={13} />Design Study(Range by Step)</Node>
            <Node $pad={7}><Twist>+</Twist><Icon name="graph" size={13} />Results and Graphs</Node>
          </Tree>
        </StudyTree>
        <Results>
          <ResultTabs>
            <ResultTab>Variable View</ResultTab>
            <ResultTab>Table View</ResultTab>
            <ResultTab $on>Results View</ResultTab>
            <ResultIcons>
              {['list', 'runSmall', 'openGrey', 'save'].map((n) => <Tool key={n} aria-label={n} $h={15}><Icon name={n} /></Tool>)}
            </ResultIcons>
          </ResultTabs>
          <Status>12 of 12 scenarios ran successfully. Design Study Quality: High</Status>
          <DataTable>
            <colgroup>
              <col width="110" />
              <col width="115" />
              {columns.map((k) => <col key={k} />)}
            </colgroup>
            <thead>
              <tr>
                <HeadCell aria-label="Variable" />
                <HeadCell aria-label="Control" />
                {columns.map((k, i) => <HeadCell key={k} scope="col" $on={i === picked} $heavy={i === 1}>{k}</HeadCell>)}
              </tr>
            </thead>
            <tbody>
              {rows.map((r) => (
                <tr key={r.name}>
                  <RowHead scope="row">{r.name}</RowHead>
                  <Cell>
                    {r.ticks ? (
                      <SliderBox>
                        <Slider type="range" aria-label={r.name} defaultValue={r.at} />
                        <Ticks>{Array.from({ length: r.ticks }, (_, i) => <i key={i} />)}</Ticks>
                      </SliderBox>
                    ) : 'Monitor Only'}
                  </Cell>
                  {r.values.map((v, i) => <Cell key={i} $heavy={i === 1} $on={i === picked}>{v}</Cell>)}
                </tr>
              ))}
            </tbody>
          </DataTable>
        </Results>
      </StudyPanel>
    </Frame>
  );
}
